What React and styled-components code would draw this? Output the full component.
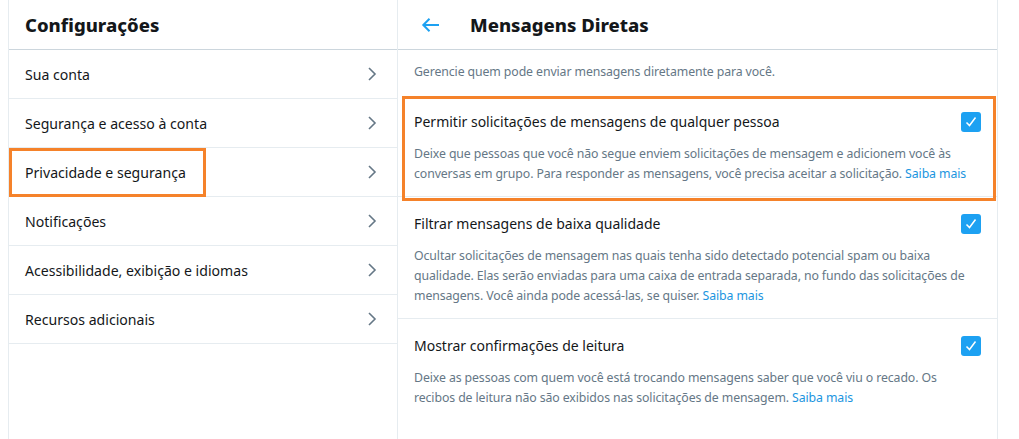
import React from 'react';
import styled, { createGlobalStyle } from 'styled-components';

const GlobalStyle = createGlobalStyle`
  body {
    margin: 0;
    background: #fff;
    font-family: "Noto Sans", "Open Sans", sans-serif;
    color: #14171a;
  }
`;

const Page = styled.div`
  display: flex;
  padding-left: 8px;
  height: 439px;
  overflow: hidden;
`;

const SettingsColumn = styled.div`
  width: 390px;
  box-sizing: border-box;
  border-left: 1px solid #e6ecf0;
  border-right: 1px solid #e6ecf0;
`;

const DetailColumn = styled.div`
  width: 600px;
  box-sizing: border-box;
  border-right: 1px solid #e6ecf0;
`;

const Header = styled.div`
  height: 50px;
  box-sizing: border-box;
  display: flex;
  align-items: center;
  padding-left: ${p => p.$indent || 16}px;
  border-bottom: 1px solid #ccd6dd;
`;

const Title = styled.h2`
  margin: 0 0 0 ${p => p.$offset || 0}px;
  font-size: 18.5px;
  font-weight: 800;
  line-height: 24px;
  color: #14171a;
`;

const BackButton = styled.button`
  border: 0;
  background: none;
  padding: 0;
  width: 22px;
  height: 22px;
  display: flex;
  align-items: center;
  justify-content: center;
  color: #1da1f2;
  cursor: pointer;
`;

const MenuRow = styled.div`
  position: relative;
  height: 49px;
  box-sizing: border-box;
  display: flex;
  align-items: center;
  justify-content: space-between;
  padding: 0 20px 0 16px;
  border-bottom: 1px solid #e6ecf0;
  font-size: 14.1px;
  color: #14171a;
`;

const Highlight = styled.div`
  position: absolute;
  box-sizing: border-box;
  border: 3px solid #f5822a;
  pointer-events: none;
  left: ${p => p.$left}px;
  top: ${p => p.$top}px;
  ${p => (p.$width ? `width: ${p.$width}px;` : `right: ${p.$right}px;`)}
  bottom: ${p => p.$bottom}px;
`;

const Intro = styled.p`
  margin: 0;
  padding: 12px 16px 13px;
  font-size: 12.3px;
  line-height: 20px;
  letter-spacing: -0.1px;
  color: #657786;
`;

const Section = styled.div`
  position: relative;
  padding: 15px 16px 12px;
  border-bottom: ${p => (p.$last ? '0' : '1px solid #e6ecf0')};
`;

const SectionHead = styled.div`
  display: flex;
  align-items: center;
  justify-content: space-between;
  height: 24px;
`;

const SectionTitle = styled.span`
  font-size: 14px;
  line-height: 24px;
  color: #14171a;
`;

const Check = styled.span`
  width: 20px;
  height: 20px;
  border-radius: 3px;
  background: #1da1f2;
  display: flex;
  align-items: center;
  justify-content: center;
`;

const SectionText = styled.p`
  margin: 10px 0 0;
  padding-right: 10px;
  font-size: 12.3px;
  line-height: 20px;
  letter-spacing: -0.1px;
  color: #657786;
`;

const More = styled.a`
  color: #1b95e0;
  text-decoration: none;
  white-space: nowrap;
`;

const Chevron = () => (
  <svg width="10" height="16" viewBox="0 0 10 16">
    <polyline points="2,2 8,8 2,14" fill="none" stroke="#657786" strokeWidth="1.6" />
  </svg>
);

const Arrow = () => (
  <svg width="20" height="16" viewBox="0 0 20 16">
    <path d="M18 8H2.5M8.5 1.8L2.3 8l6.2 6.2" fill="none" stroke="currentColor" strokeWidth="2" />
  </svg>
);

const Tick = () => (
  <svg width="14" height="14" viewBox="0 0 14 14">
    <polyline points="2.5,7.5 5.5,10.5 11.5,2.5" fill="none" stroke="#fff" strokeWidth="1.5" />
  </svg>
);

const menu = [
  'Sua conta',
  'Segurança e acesso à conta',
  'Privacidade e segurança',
  'Notificações',
  'Acessibilidade, exibição e idiomas',
  'Recursos adicionais',
];

const sections = [
  {
    title: 'Permitir solicitações de mensagens de qualquer pessoa',
    text: 'Deixe que pessoas que você não segue enviem solicitações de mensagem e adicionem você às conversas em grupo. Para responder as mensagens, você precisa aceitar a solicitação.',
    marked: true,
  },
  {
    title: 'Filtrar mensagens de baixa qualidade',
    text: 'Ocultar solicitações de mensagem nas quais tenha sido detectado potencial spam ou baixa qualidade. Elas serão enviadas para uma caixa de entrada separada, no fundo das solicitações de mensagens. Você ainda pode acessá-las, se quiser.',
  },
  {
    title: 'Mostrar confirmações de leitura',
    text: 'Deixe as pessoas com quem você está trocando mensagens saber que você viu o recado. Os recibos de leitura não são exibidos nas solicitações de mensagem.',
  },
];

export default function App() {
  return (
    <Page>
      <GlobalStyle />
      <SettingsColumn>
        <Header>
          <Title>Configurações</Title>
        </Header>
        {menu.map(item => (
          <MenuRow key={item}>
            <span>{item}</span>
            <Chevron />
            {item === 'Privacidade e segurança' && (
              <Highlight $left={0} $top={0} $width={197} $bottom={-1} />
            )}
          </MenuRow>
        ))}
      </SettingsColumn>
      <DetailColumn>
        <Header $indent={22}>
          <BackButton aria-label="Voltar">
            <Arrow />
          </BackButton>
          <Title $offset={28}>Mensagens Diretas</Title>
        </Header>
        <Intro>Gerencie quem pode enviar mensagens diretamente para você.</Intro>
        {sections.map((s, i) => (
          <Section key={s.title} $last={i === sections.length - 1}>
            <SectionHead>
              <SectionTitle>{s.title}</SectionTitle>
              <Check>
                <Tick />
              </Check>
            </SectionHead>
            <SectionText>
              {s.text} <More href="#">Saiba mais</More>
            </SectionText>
            {s.marked && <Highlight $left={4} $top={1} $right={1} $bottom={-5} />}
          </Section>
        ))}
      </DetailColumn>
    </Page>
  );
}
